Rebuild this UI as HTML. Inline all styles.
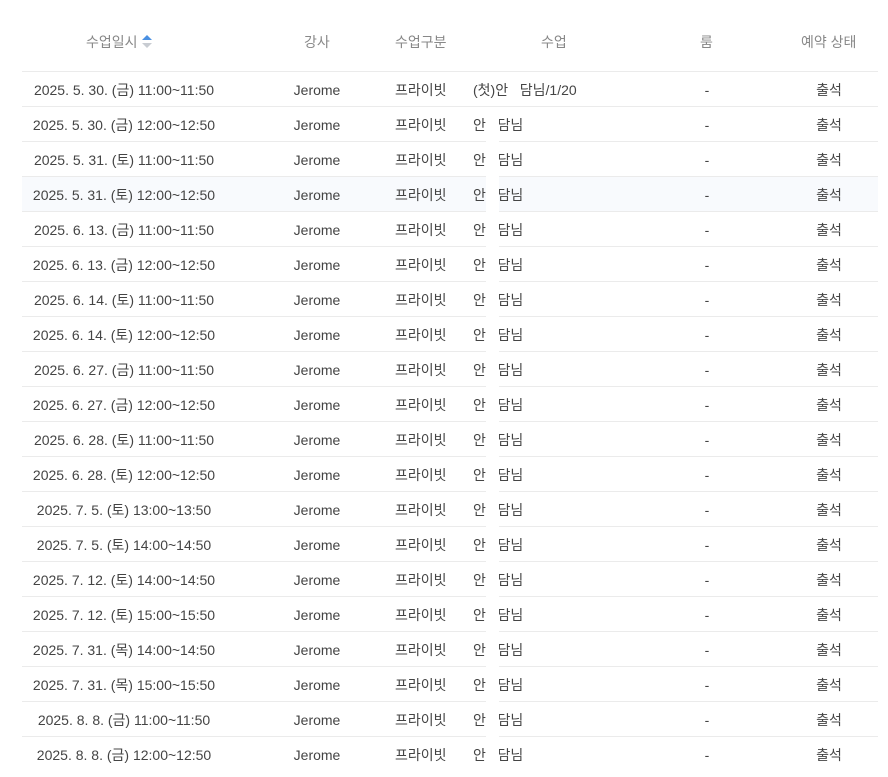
<!DOCTYPE html>
<html><head><meta charset="utf-8"><style>
body{margin:0;width:888px;height:772px;background:#fff;overflow:hidden;font-family:"Liberation Sans","Noto Sans CJK KR",sans-serif;font-size:14px;color:#444;position:relative}
.h{position:absolute;top:32px;color:#888;font-size:14px;line-height:20px}
.r{position:absolute;left:22px;width:856px;height:34px;border-top:1px solid #ebebeb}
.r span{position:absolute;top:8px;line-height:20px;white-space:nowrap}
.c1{left:0;width:204px;text-align:center}
.c2{left:270px;width:50px;text-align:center}
.c3{left:373px}
.c4{left:451px}
.c5{left:680px;width:10px;text-align:center}
.c6{left:780px;width:54px;text-align:center}
.gap{position:absolute;left:486px;width:13px;top:107px;height:670px;background:#fff}
</style></head><body>
<div class="h" style="left:86px">수업일시 <svg width="12" height="16" viewBox="0 0 12 16" style="vertical-align:-2px"><path d="M6 2L11 7H1z" fill="#4a90e2"/><path d="M6 15L11 10H1z" fill="#c8ccd2"/></svg></div>
<div class="h" style="left:304px">강사</div>
<div class="h" style="left:395px">수업구분</div>
<div class="h" style="left:541px">수업</div>
<div class="h" style="left:700px">룸</div>
<div class="h" style="left:801px">예약 상태</div>
<div class="r" style="top:71px"><span class="c1">2025. 5. 30. (금) 11:00~11:50</span><span class="c2">Jerome</span><span class="c3">프라이빗</span><span class="c4">(첫)안&nbsp;&nbsp; 담님/1/20</span><span class="c5">-</span><span class="c6">출석</span></div>
<div class="r" style="top:106px"><span class="c1">2025. 5. 30. (금) 12:00~12:50</span><span class="c2">Jerome</span><span class="c3">프라이빗</span><span class="c4">안&nbsp;&nbsp; 담님</span><span class="c5">-</span><span class="c6">출석</span></div>
<div class="r" style="top:141px"><span class="c1">2025. 5. 31. (토) 11:00~11:50</span><span class="c2">Jerome</span><span class="c3">프라이빗</span><span class="c4">안&nbsp;&nbsp; 담님</span><span class="c5">-</span><span class="c6">출석</span></div>
<div class="r" style="top:176px;background:#f8fafd"><span class="c1">2025. 5. 31. (토) 12:00~12:50</span><span class="c2">Jerome</span><span class="c3">프라이빗</span><span class="c4">안&nbsp;&nbsp; 담님</span><span class="c5">-</span><span class="c6">출석</span></div>
<div class="r" style="top:211px"><span class="c1">2025. 6. 13. (금) 11:00~11:50</span><span class="c2">Jerome</span><span class="c3">프라이빗</span><span class="c4">안&nbsp;&nbsp; 담님</span><span class="c5">-</span><span class="c6">출석</span></div>
<div class="r" style="top:246px"><span class="c1">2025. 6. 13. (금) 12:00~12:50</span><span class="c2">Jerome</span><span class="c3">프라이빗</span><span class="c4">안&nbsp;&nbsp; 담님</span><span class="c5">-</span><span class="c6">출석</span></div>
<div class="r" style="top:281px"><span class="c1">2025. 6. 14. (토) 11:00~11:50</span><span class="c2">Jerome</span><span class="c3">프라이빗</span><span class="c4">안&nbsp;&nbsp; 담님</span><span class="c5">-</span><span class="c6">출석</span></div>
<div class="r" style="top:316px"><span class="c1">2025. 6. 14. (토) 12:00~12:50</span><span class="c2">Jerome</span><span class="c3">프라이빗</span><span class="c4">안&nbsp;&nbsp; 담님</span><span class="c5">-</span><span class="c6">출석</span></div>
<div class="r" style="top:351px"><span class="c1">2025. 6. 27. (금) 11:00~11:50</span><span class="c2">Jerome</span><span class="c3">프라이빗</span><span class="c4">안&nbsp;&nbsp; 담님</span><span class="c5">-</span><span class="c6">출석</span></div>
<div class="r" style="top:386px"><span class="c1">2025. 6. 27. (금) 12:00~12:50</span><span class="c2">Jerome</span><span class="c3">프라이빗</span><span class="c4">안&nbsp;&nbsp; 담님</span><span class="c5">-</span><span class="c6">출석</span></div>
<div class="r" style="top:421px"><span class="c1">2025. 6. 28. (토) 11:00~11:50</span><span class="c2">Jerome</span><span class="c3">프라이빗</span><span class="c4">안&nbsp;&nbsp; 담님</span><span class="c5">-</span><span class="c6">출석</span></div>
<div class="r" style="top:456px"><span class="c1">2025. 6. 28. (토) 12:00~12:50</span><span class="c2">Jerome</span><span class="c3">프라이빗</span><span class="c4">안&nbsp;&nbsp; 담님</span><span class="c5">-</span><span class="c6">출석</span></div>
<div class="r" style="top:491px"><span class="c1">2025. 7. 5. (토) 13:00~13:50</span><span class="c2">Jerome</span><span class="c3">프라이빗</span><span class="c4">안&nbsp;&nbsp; 담님</span><span class="c5">-</span><span class="c6">출석</span></div>
<div class="r" style="top:526px"><span class="c1">2025. 7. 5. (토) 14:00~14:50</span><span class="c2">Jerome</span><span class="c3">프라이빗</span><span class="c4">안&nbsp;&nbsp; 담님</span><span class="c5">-</span><span class="c6">출석</span></div>
<div class="r" style="top:561px"><span class="c1">2025. 7. 12. (토) 14:00~14:50</span><span class="c2">Jerome</span><span class="c3">프라이빗</span><span class="c4">안&nbsp;&nbsp; 담님</span><span class="c5">-</span><span class="c6">출석</span></div>
<div class="r" style="top:596px"><span class="c1">2025. 7. 12. (토) 15:00~15:50</span><span class="c2">Jerome</span><span class="c3">프라이빗</span><span class="c4">안&nbsp;&nbsp; 담님</span><span class="c5">-</span><span class="c6">출석</span></div>
<div class="r" style="top:631px"><span class="c1">2025. 7. 31. (목) 14:00~14:50</span><span class="c2">Jerome</span><span class="c3">프라이빗</span><span class="c4">안&nbsp;&nbsp; 담님</span><span class="c5">-</span><span class="c6">출석</span></div>
<div class="r" style="top:666px"><span class="c1">2025. 7. 31. (목) 15:00~15:50</span><span class="c2">Jerome</span><span class="c3">프라이빗</span><span class="c4">안&nbsp;&nbsp; 담님</span><span class="c5">-</span><span class="c6">출석</span></div>
<div class="r" style="top:701px"><span class="c1">2025. 8. 8. (금) 11:00~11:50</span><span class="c2">Jerome</span><span class="c3">프라이빗</span><span class="c4">안&nbsp;&nbsp; 담님</span><span class="c5">-</span><span class="c6">출석</span></div>
<div class="r" style="top:736px"><span class="c1">2025. 8. 8. (금) 12:00~12:50</span><span class="c2">Jerome</span><span class="c3">프라이빗</span><span class="c4">안&nbsp;&nbsp; 담님</span><span class="c5">-</span><span class="c6">출석</span></div>
<div class="gap"></div>
</body></html>
